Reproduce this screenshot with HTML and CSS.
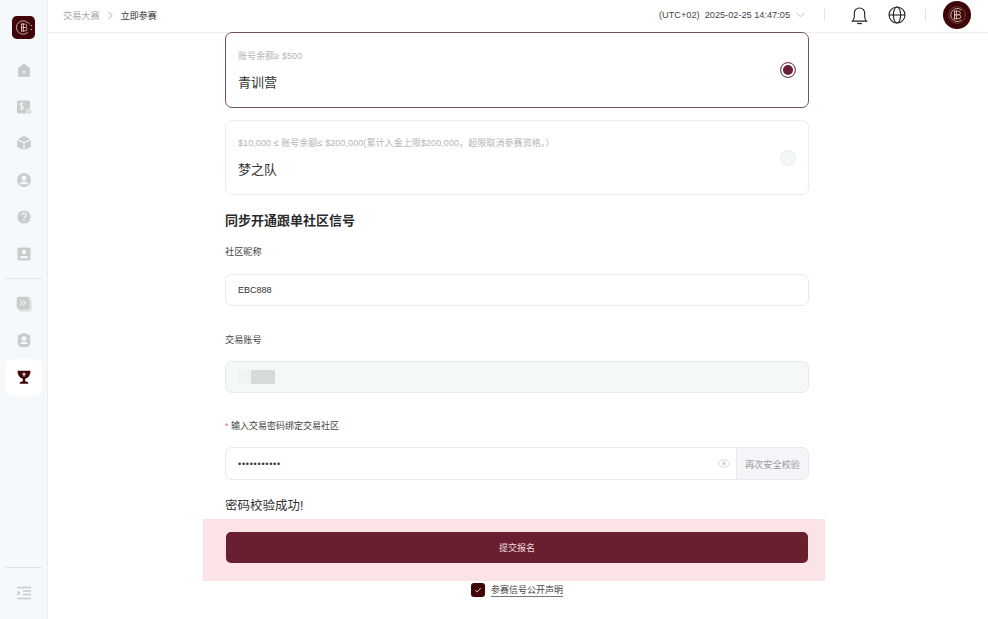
FILE: index.html
```html
<!DOCTYPE html>
<html lang="zh-CN">
<head>
<meta charset="utf-8">
<title>立即参赛</title>
<link rel="stylesheet" href="styles.css">
</head>
<body>
<div class="app">
  <aside class="sidebar">
    <div class="logo">
      <svg viewBox="0 0 24 24" width="23" height="23"><rect width="24" height="24" rx="5" fill="#3f0508"/><g fill="none" stroke="#d9c4b8" stroke-width=".9"><path d="M16.5 7a7 7 0 1 0 0 10"/><path d="M18.5 8.5a8 8 0 0 0-2-1.6"/><path d="M10 8.5h4a1.8 1.8 0 0 1 0 3.5h-4h4.4a1.8 1.8 0 0 1 0 3.5H10zM10 7.5v9M12 7.5v9"/><circle cx="20" cy="10" r=".4"/><circle cx="20" cy="14" r=".4"/></g></svg>
    </div>
    <nav class="nav">
      <a class="nav-item"><svg viewBox="0 0 16 16" class="ico"><path fill="#c9cbcc" d="M8 1.5 14 6v8a1 1 0 0 1-1 1H3a1 1 0 0 1-1-1V6z"/><circle cx="8" cy="10" r="1" fill="#f5f9fb"/></svg></a>
      <a class="nav-item"><svg viewBox="0 0 16 16" class="ico"><rect x="1" y="1.5" width="13" height="13" rx="1.5" fill="#c9cbcc"/><path d="M7 4.5H5.2a1.2 1.2 0 0 0 0 2.8h1a1.2 1.2 0 0 1 0 2.8H4M5.6 3.5v8" fill="none" stroke="#f5f9fb" stroke-width="1"/><circle cx="13" cy="12.5" r="2.6" fill="#c9cbcc" stroke="#f5f9fb"/><circle cx="13" cy="12.5" r=".9" fill="#f5f9fb"/></svg></a>
      <a class="nav-item"><svg viewBox="0 0 16 16" class="ico"><path fill="#c9cbcc" d="M8 1 14.3 4 8 7 1.7 4zM1.2 5.2 7.4 8v7L1.2 12zM14.8 5.2 8.6 8v7l6.2-3z"/></svg></a>
      <a class="nav-item"><svg viewBox="0 0 16 16" class="ico"><circle cx="8" cy="8" r="7" fill="#c9cbcc"/><circle cx="8" cy="6" r="2.4" fill="#f5f9fb"/><path d="M3.6 12.2c.6-2 2.4-3 4.4-3s3.8 1 4.4 3z" fill="#f5f9fb"/></svg></a>
      <a class="nav-item"><svg viewBox="0 0 16 16" class="ico"><circle cx="8" cy="8" r="6.6" fill="#c9cbcc"/><path d="M6 6.2a2 2 0 1 1 3 1.7c-.7.4-1 .8-1 1.6" fill="none" stroke="#f5f9fb" stroke-width="1.2"/><circle cx="8" cy="11.6" r=".8" fill="#f5f9fb"/></svg></a>
      <a class="nav-item"><svg viewBox="0 0 16 16" class="ico"><rect x="1.5" y="1.5" width="13" height="13" rx="1.5" fill="#c9cbcc"/><circle cx="8" cy="6" r="2.2" fill="#f5f9fb"/><rect x="4" y="10" width="8" height="2.2" rx="1" fill="#f5f9fb"/></svg></a>
    </nav>
    <div class="rule rule-mid"></div>
    <nav class="nav">
      <a class="nav-item"><svg viewBox="0 0 16 16" class="ico"><rect x="3" y="3" width="12.5" height="12.5" rx="2" fill="#dcdedf"/><rect x=".8" y=".8" width="12.5" height="12.5" rx="2" fill="#c9cbcc"/><path d="M4 4.5 6.2 7 4 9.500M7.200 4.500 9.400 7 7.200 9.500" fill="none" stroke="#f5f9fb" stroke-width="1.100"/></svg></a>
      <a class="nav-item"><svg viewBox="0 0 16 16" class="ico"><path fill="#c9cbcc" d="M8 .8 14.300 3.500V11c0 2-1.500 4-3.500 4H5.200c-2 0-3.500-2-3.500-4V3.500z"/><circle cx="8" cy="6.600" r="2.300" fill="#f5f9fb"/><path d="M4 12c.6-1.500 2.200-2.200 4-2.200s3.400.7 4 2.200z" fill="#f5f9fb"/></svg></a>
      <a class="nav-item is-active"><svg viewBox="0 0 16 16" class="ico"><path fill="#3f0508" d="M1.500 1.800h13c0 4.200-2 7-5.300 8v2.400l3 1.100v1.500H3.800v-1.500l3-1.100V9.800C3.500 8.800 1.500 6 1.500 1.800z"/><path d="M8 3.500v4M6.300 5.200h3.400" stroke="#fff" stroke-width="1"/></svg></a>
    </nav>
    <div class="side-foot">
      <div class="rule"></div>
      <a class="nav-item"><svg viewBox="0 0 16 16" class="ico"><path d="M1 2.500h14M7 6h8M7 9.500h8M1 13.500h14" stroke="#c9cbcc" stroke-width="1.500"/><path d="M1.500 5.500v5L5 8z" fill="#c9cbcc"/></svg></a>
    </div>
  </aside>

  <div class="main">
    <header class="topbar">
      <div class="crumbs">
        <span class="crumb-parent">交易大赛</span>
        <svg class="crumb-sep" viewBox="0 0 8 10" width="7" height="9"><path d="M1.500 1 6 5 1.500 9" fill="none" stroke="#9a9a9a" stroke-width=".9"/></svg>
        <span class="crumb-current">立即参赛</span>
      </div>
      <div class="top-right">
        <span class="clock">(UTC+02)&nbsp; 2025-02-25 14:47:05</span>
        <svg class="chev" viewBox="0 0 10 6" width="9" height="6"><path d="M.7 .8 5 5 9.300 .8" fill="none" stroke="#b0b0b0" stroke-width=".9"/></svg>
        <span class="vrule vrule-a"></span>
        <svg class="bell" viewBox="0 0 18 20" width="17" height="19"><path d="M1.500 16h15c-1.400-1.200-2-2.400-2-5V7.500a5.500 5.500 0 0 0-11 0V11c0 2.600-.6 3.800-2 5z" fill="none" stroke="#222" stroke-width="1.200"/><path d="M6.500 18.500h5" stroke="#222" stroke-width="1.300"/></svg>
        <svg class="globe" viewBox="0 0 18 18" width="18" height="18"><g fill="none" stroke="#222" stroke-width="1.100"><circle cx="9" cy="9" r="8"/><ellipse cx="9" cy="9" rx="3.600" ry="8"/><path d="M1 9h16"/></g></svg>
        <span class="vrule vrule-b"></span>
        <span class="avatar">
          <svg viewBox="0 0 28 28" width="28" height="28"><circle cx="14" cy="14" r="14" fill="#3f0508"/><g fill="none" stroke="#d9c4b8" stroke-width=".9"><path d="M18.500 9a6.500 6.500 0 1 0 0 10"/><circle cx="14" cy="14" r="8.300" opacity=".35"/><path d="M11.500 10.200h4a1.700 1.700 0 0 1 0 3.600h-4h4.400a1.700 1.700 0 0 1 0 3.800h-4.400zM11.500 9.500v9M13.500 9.500v9"/></g></svg>
        </span>
      </div>
    </header>

    <main class="content">
      <div class="form">
        <div class="plan plan-active">
          <div class="plan-text">
            <div class="plan-note">账号余额≥ $500</div>
            <div class="plan-name">青训营</div>
          </div>
          <span class="radio radio-on"></span>
        </div>
        <div class="plan plan-off">
          <div class="plan-text">
            <div class="plan-note">$10,000 ≤ 账号余额≤ $200,000(累计入金上限$200,000，超限取消参赛资格。）</div>
            <div class="plan-name">梦之队</div>
          </div>
          <span class="radio"></span>
        </div>

        <h2 class="section-title">同步开通跟单社区信号</h2>

        <label class="field-label label-first">社区昵称</label>
        <div class="input">EBC888</div>

        <label class="field-label">交易账号</label>
        <div class="input input-disabled"><span class="mosaic"></span></div>

        <label class="field-label label-pwd"><span class="req">*</span> 输入交易密码绑定交易社区</label>
        <div class="input-group">
          <div class="input input-pwd">
            <span class="dots">•••••••••••</span>
            <svg class="eye" viewBox="0 0 14 10" width="12" height="9"><path d="M.5 5C2 2 4.300.8 7 .8S12 2 13.500 5C12 8 9.700 9.200 7 9.200S2 8 .5 5z" fill="none" stroke="#cfcfcf"/><circle cx="7" cy="5" r="2" fill="#cfcfcf"/></svg>
          </div>
          <div class="addon">再次安全校验</div>
        </div>

        <p class="success">密码校验成功!</p>

        <div class="submit-band">
          <button class="submit">提交报名</button>
        </div>

        <div class="agree">
          <span class="check"><svg viewBox="0 0 10 10" width="8" height="8"><path d="M1.500 5.200 4 7.500 8.500 2.500" fill="none" stroke="#f2e6e6" stroke-width="1.100"/></svg></span>
          <span class="agree-text">参赛信号公开声明</span>
        </div>
      </div>
    </main>
  </div>
</div>
</body>
</html>
```
FILE: styles.css
```css
* { box-sizing: border-box; }
html, body { margin: 0; padding: 0; height: 100%; overflow: hidden; background: #fff; }
body { font-family: "Liberation Sans", "Noto Sans CJK SC", sans-serif; color: #333; font-size: 9px; }
.app { display: flex; height: 619px; }

.sidebar { width: 48px; flex: none; display: flex; flex-direction: column; align-items: center; background: #f5f9fb; border-right: 1px solid #eceeef; padding: 16px 0 8px; }
.logo { height: 23px; margin-bottom: 12.500px; }
.logo svg { display: block; }
.nav { display: flex; flex-direction: column; width: 37px; }
.nav-item { height: 36.800px; display: flex; align-items: center; justify-content: center; border-radius: 8px; }
.ico { width: 16px; height: 16px; display: block; }
.is-active { background: #fff; }
.rule { width: 37px; height: 1px; background: #e2e4e5; }
.rule-mid { margin: 6px 0; }
.side-foot { margin-top: auto; display: flex; flex-direction: column; align-items: center; }
.side-foot .nav-item { width: 37px; margin-top: 6px; }

.main { flex: 1; min-width: 0; display: flex; flex-direction: column; }
.topbar { height: 32px; flex: none; display: flex; align-items: center; justify-content: space-between; padding: 0 17px 2px 15px; box-shadow: 0 1px 0 #eeeeee; background: #fff; }
.crumbs { display: flex; align-items: center; }
.crumb-parent { color: #a9a9a9; font-size: 9.200px; }
.crumb-sep { margin: 0 7px 0 7px; }
.crumb-current { color: #333; font-size: 9px; }
.top-right { display: flex; align-items: center; }
.clock { font-size: 9.200px; color: #444; white-space: nowrap; }
.chev { margin-left: 6px; }
.vrule { width: 1px; height: 12px; background: #e4e4e4; }
.vrule-a { margin: 0 26px 0 19px; }
.bell { margin-right: 20px; }
.vrule-b { margin: 0 17px 0 19px; }
.avatar { display: block; width: 28px; height: 28px; }
.avatar svg { display: block; }

.content { flex: 1; padding-left: 177px; }
.form { width: 584px; display: flex; flex-direction: column; }
.plan { height: 75px; border-radius: 7px; padding: 15px 12px; display: flex; justify-content: space-between; align-items: center; background: #fff; border: 1px solid #ecedee; }
.plan-active { border-color: #76505d; height: 76px; margin-bottom: 12px; }
.plan-off .radio { background: #f3f7f8; border: 1px solid #e9eeef; }
.plan-text { display: flex; flex-direction: column; }
.plan-note { font-size: 9px; line-height: 14px; color: #b5b5b5; letter-spacing: .08px; }
.plan-name { font-size: 13px; line-height: 18px; color: #333; margin-top: 11px; }
.radio { width: 16px; height: 16px; border-radius: 50%; flex: none; }
.radio-on { background: #6a1f33; border: 1px solid #76505d; box-shadow: inset 0 0 0 2px #fff; }

.section-title { margin: 17px 0 0; font-size: 13px; line-height: 18px; font-weight: 700; color: #2b2b2b; }
.field-label { display: block; font-size: 9.200px; line-height: 14px; color: #444; margin: 27px 0 14px; }
.label-first { margin-top: 15px; margin-bottom: 15px; }
.label-pwd { font-size: 9px; margin-top: 26px; }
.req { color: #e7727f; }
.input { height: 32px; border: 1px solid #e8e9ea; border-radius: 7px; padding: 0 12px; display: flex; align-items: center; font-size: 9px; color: #333; background: #fff; }
.input-disabled { background: #f4f8f8; }
.mosaic { width: 37px; height: 14px; background: linear-gradient(90deg, #eef1f1 0 35%, #c9cbcb 35% 100%); opacity: .65; border-radius: 1px; }
.input-group { display: flex; height: 33px; }
.input-pwd { flex: 1; height: 33px; border-radius: 7px 0 0 7px; border-right: 0; justify-content: space-between; padding-right: 6px; }
.dots { font-size: 9px; letter-spacing: .75px; color: #333; }
.addon { width: 73px; display: flex; align-items: center; justify-content: center; font-size: 9.200px; color: #9a9a9a; background: #f4f4f9; border: 1px solid #e8e9ea; border-radius: 0 7px 7px 0; }
.success { margin: 17px 0 4px; font-size: 12.500px; line-height: 18px; color: #333; }
.submit-band { margin: 0 -16px 0 -22px; background: #fbe3e6; padding: 13px 16px 18px 23px; height: 62px; }
.submit { display: block; width: 582px; height: 31px; border: 0; border-radius: 5px; background: #6a1f31; color: #f0dcdc; font-family: inherit; font-size: 9px; padding: 0; }
.agree { display: flex; align-items: center; justify-content: center; margin-top: 2px; height: 14px; gap: 6px; }
.check { width: 14px; height: 14px; border-radius: 3px; background: #3f0508; display: flex; align-items: center; justify-content: center; }
.agree-text { font-size: 9px; line-height: 12px; color: #444; border-bottom: 1px solid #777; }
```
